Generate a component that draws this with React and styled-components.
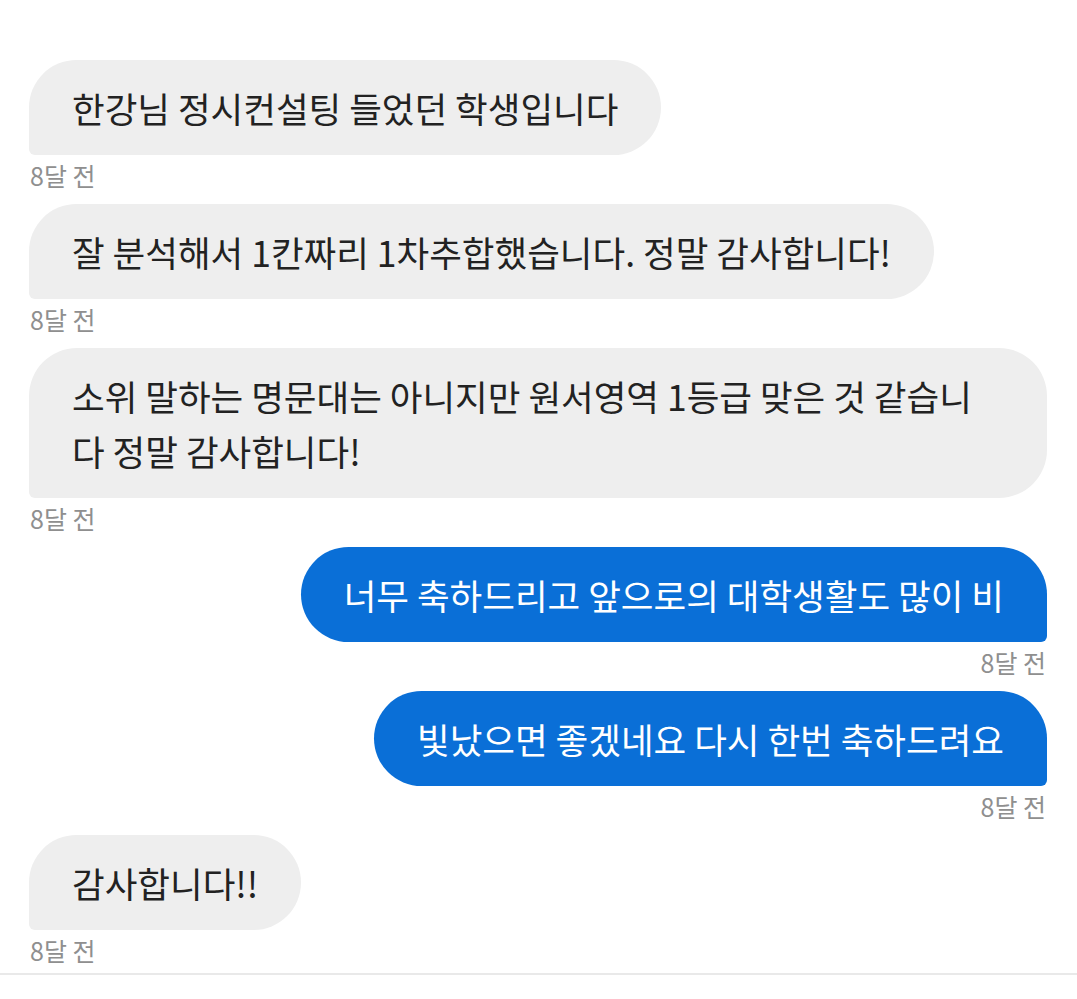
import React from "react";
import styled, { createGlobalStyle } from "styled-components";

const Global = createGlobalStyle`
  html, body { margin: 0; padding: 0; background: #ffffff; }
  body { font-family: "Noto Sans CJK KR", "Noto Sans", sans-serif; }
`;

const Thread = styled.div`
  display: flex;
  flex-direction: column;
  gap: 14px;
  padding: 60px 30px 8px 29px;
  border-bottom: 2px solid #e9e9e9;
`;

const Group = styled.div`
  display: flex;
  flex-direction: column;
  align-items: ${(p) => (p.$mine ? "flex-end" : "flex-start")};
`;

const Bubble = styled.div`
  max-width: 1018px;
  box-sizing: border-box;
  padding: 20px 43px;
  font-size: 35.5px;
  line-height: 55px;
  word-break: break-all;
  background: ${(p) => (p.$mine ? "#0a6fd7" : "#eeeeee")};
  color: ${(p) => (p.$mine ? "#ffffff" : "#222222")};
  border-radius: ${(p) => (p.$mine ? "48px 48px 6px 48px" : "48px 48px 48px 6px")};
`;

const Time = styled.div`
  margin-top: 5px;
  font-size: 25px;
  line-height: 30px;
  color: #8f8f8f;
  padding: 0 1px;
`;

const messages = [
  { text: "한강님 정시컨설팅 들었던 학생입니다", mine: false },
  { text: "잘 분석해서 1칸짜리 1차추합했습니다. 정말 감사합니다!", mine: false },
  { text: "소위 말하는 명문대는 아니지만 원서영역 1등급 맞은 것 같습니다 정말 감사합니다!", mine: false },
  { text: "너무 축하드리고 앞으로의 대학생활도 많이 비", mine: true },
  { text: "빛났으면 좋겠네요 다시 한번 축하드려요", mine: true },
  { text: "감사합니다!!", mine: false },
];

export default function App() {
  return (
    <>
      <Global />
      <Thread>
        {messages.map((m, i) => (
          <Group key={i} $mine={m.mine}>
            <Bubble $mine={m.mine}>{m.text}</Bubble>
            <Time>8달 전</Time>
          </Group>
        ))}
      </Thread>
    </>
  );
}
